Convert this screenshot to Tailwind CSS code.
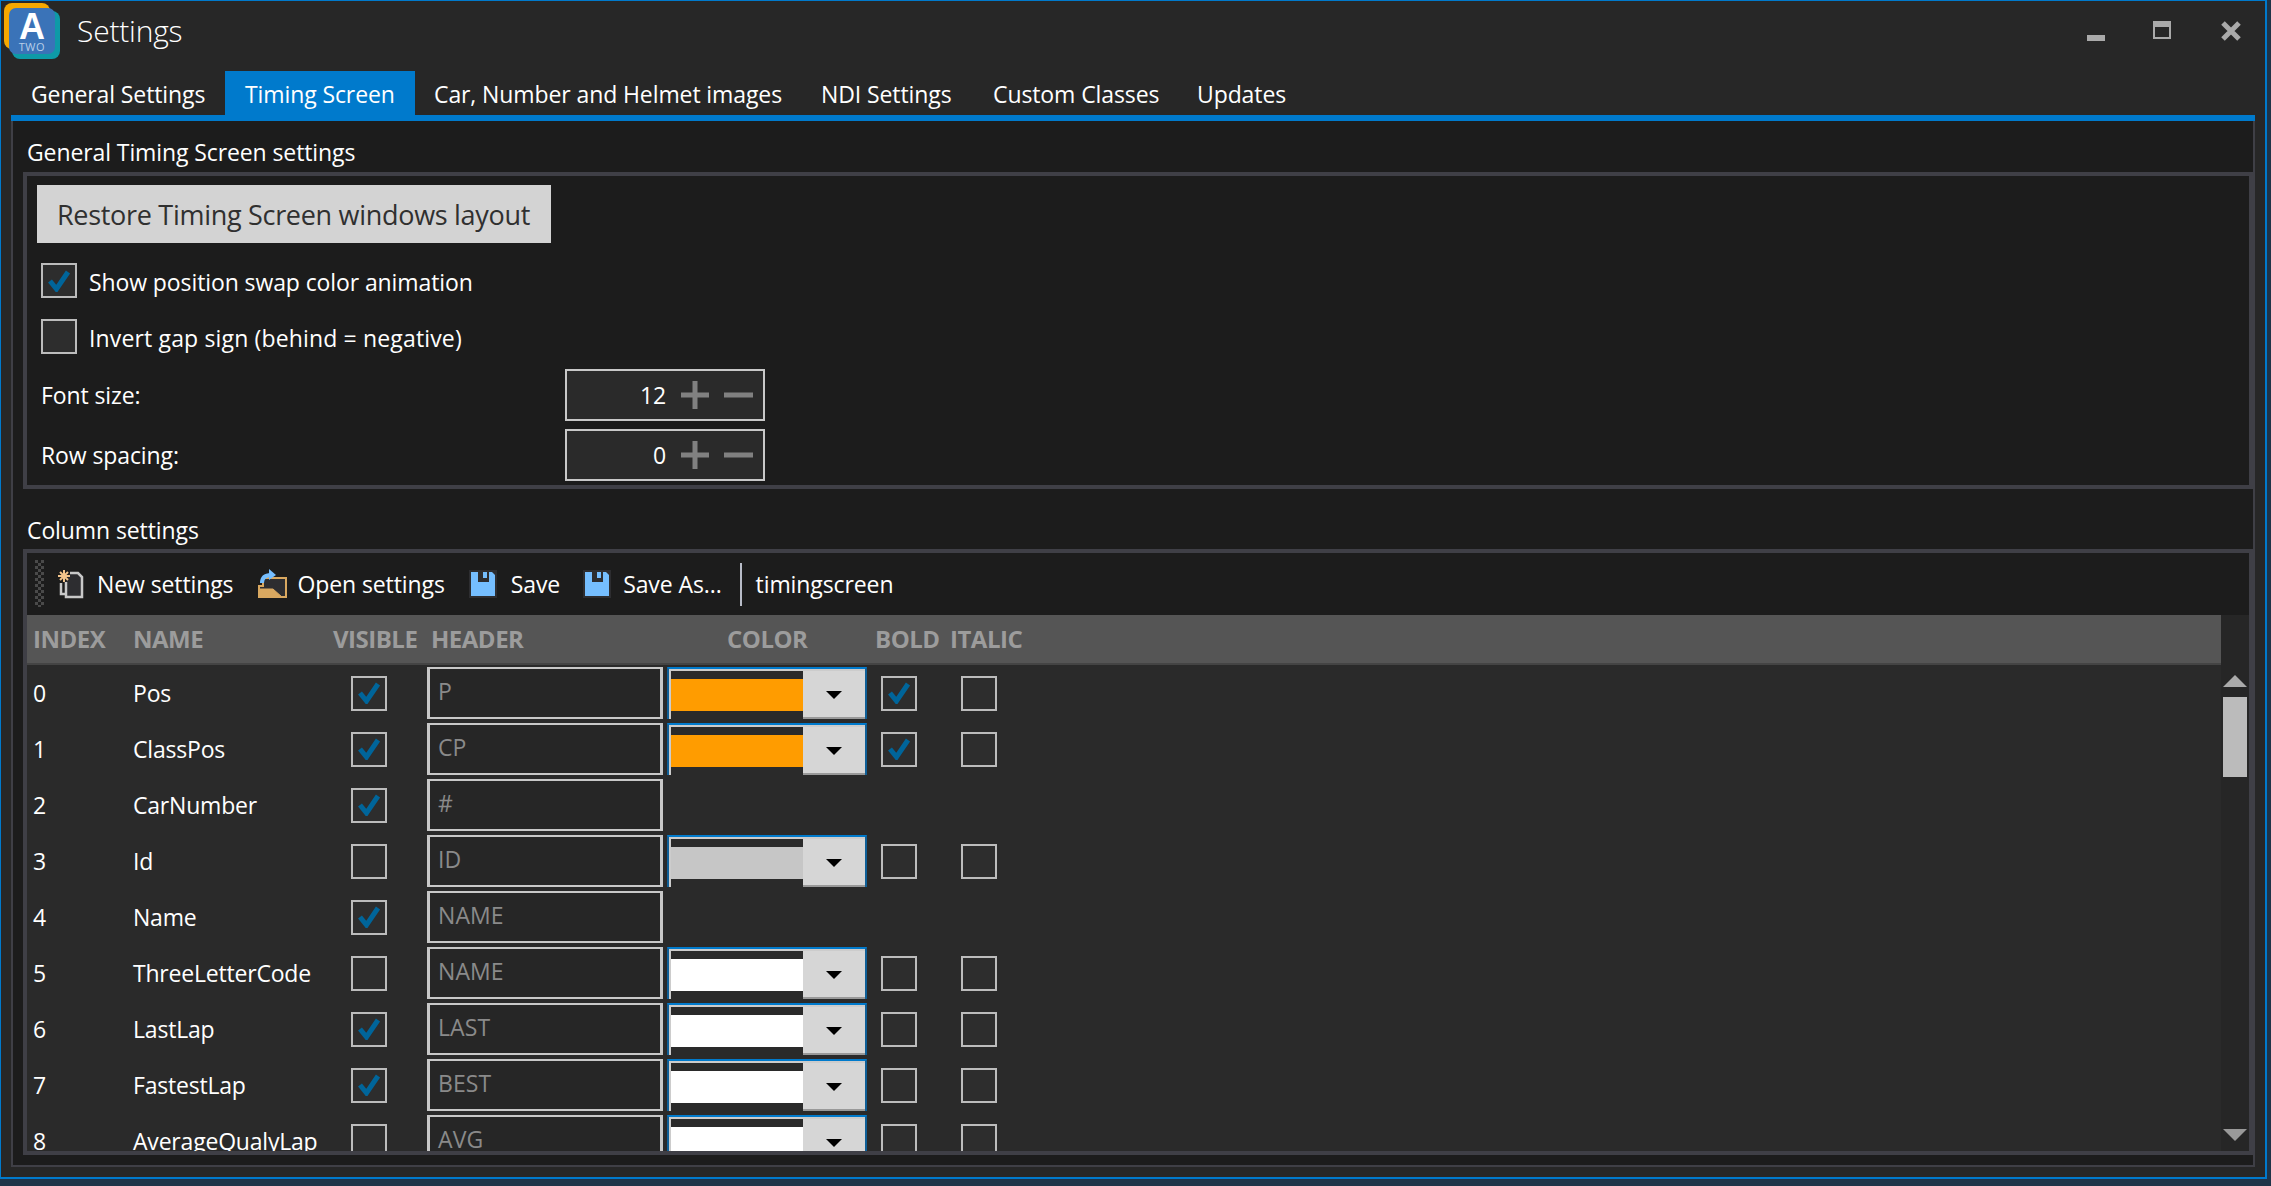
<!DOCTYPE html>
<html>
<head>
<meta charset="utf-8">
<title>Settings</title>
<script src="https://cdn.jsdelivr.net/npm/@tailwindcss/browser@4"></script>
</head>
<body class="bg-[#1f3448] overflow-hidden font-['Open_Sans','Noto_Sans',sans-serif] text-[23px] tracking-[-0.1px] text-white">
<div class="w-[2267px] h-[1179px] bg-[#272727] border-t border-l border-r-2 border-b-2 border-[#007acc] flex flex-col">
  <!-- title bar -->
  <div class="h-[70px] flex items-start shrink-0">
    <div class="relative w-[56px] h-[56px] ml-[3px] mt-[2px] shrink-0">
      <div class="absolute left-0 top-0 w-[46px] h-[46px] rounded-[8px] bg-[#f5a800]"></div>
      <div class="absolute left-[8px] top-[8px] w-[48px] h-[48px] rounded-[8px] bg-[#0e9aa7]"></div>
      <div class="absolute left-[5px] top-[5px] w-[46px] h-[46px] rounded-[7px] bg-[#3a73b8] flex flex-col items-center pt-[4px]">
        <span class="text-[36px] leading-[30px] font-bold tracking-normal font-['Liberation_Sans',sans-serif]">A</span>
        <span class="text-[11px] leading-[10px] tracking-[0.6px] text-[#b9cfe8]">TWO</span>
      </div>
    </div>
    <span class="ml-[17px] mt-[12px] text-[30px] leading-[36px] font-light tracking-[-0.2px] text-white">Settings</span>
    <div class="flex-1"></div>
    <div class="w-[18px] h-[6px] bg-[#aaaaaa] mt-[34px] mr-[48px]"></div>
    <div class="w-[18px] h-[18px] border-2 border-t-[6px] border-[#aaaaaa] mt-[20px] mr-[50px]"></div>
    <svg class="mt-[20px] mr-[24px]" width="20" height="20" viewBox="0 0 20 20"><path d="M2 2 18 18M18 2 2 18" stroke="#aaaaaa" stroke-width="5" fill="none"/></svg>
  </div>
  <!-- tabs -->
  <div class="h-[44px] flex items-stretch ml-[10px] mr-[10px] shrink-0 leading-[46px]">
    <div class="pl-[20px] w-[214px]">General Settings</div>
    <div class="w-[190px] pl-[20px] bg-[#007acc]">Timing Screen</div>
    <div class="pl-[19px] w-[406px]">Car, Number and Helmet images</div>
    <div class="w-[172px]">NDI Settings</div>
    <div class="w-[204px]">Custom Classes</div>
    <div>Updates</div>
  </div>
  <div class="h-[6px] bg-[#007acc] ml-[10px] mr-[10px] shrink-0"></div>
  <!-- tab content -->
  <div class="flex-1 min-h-0 ml-[10px] mr-[10px] mb-[10px] bg-[#1c1c1c] border-x-2 border-b-2 border-[#3f3f46] flex flex-col pl-[10px] pb-[10px]">
    <div class="h-[51px] pt-[15px] pl-[4px] leading-[32px] shrink-0">General Timing Screen settings</div>
    <!-- group 1 -->
    <div class="h-[317px] border-4 border-[#3f3f46] shrink-0 pl-[10px] pt-[9px]">
      <div class="w-[514px] h-[58px] bg-[#d3d3d3] text-[#303030] text-[27px] tracking-[-0.3px] leading-[60px] pl-[20px]">Restore Timing Screen windows layout</div>
      <div class="flex items-center ml-[4px] mt-[20px] h-[35px]">
        <div class="w-[36px] h-[35px] border-2 border-[#bcbcbc] bg-[#2d2d2d] flex items-center justify-center shrink-0">
          <svg width="24" height="22" viewBox="0 0 24 22"><path d="M3 11 9.500 19 21 2" stroke="#00659a" stroke-width="5" fill="none"/></svg>
        </div>
        <span class="ml-[12px] pt-[3px]">Show position swap color animation</span>
      </div>
      <div class="flex items-center ml-[4px] mt-[21px] h-[35px]">
        <div class="w-[36px] h-[35px] border-2 border-[#bcbcbc] bg-[#2d2d2d] shrink-0"></div>
        <span class="ml-[12px] pt-[3px] tracking-[0.15px]">Invert gap sign (behind = negative)</span>
      </div>
      <div class="flex items-center ml-[4px] mt-[15px] h-[52px]">
        <span class="w-[524px] pt-[1px]">Font size:</span>
        <div class="w-[200px] h-[52px] border-2 border-[#c8c8c8] bg-[#2a2a2a] flex items-center">
          <span class="w-[99px] text-right">12</span>
          <svg class="ml-[15px]" width="28" height="28" viewBox="0 0 28 28"><path d="M0 14H28M14 0V28" stroke="#808080" stroke-width="5"/></svg>
          <svg class="ml-[15px]" width="29" height="28" viewBox="0 0 29 28"><path d="M0 14H29" stroke="#808080" stroke-width="5"/></svg>
        </div>
      </div>
      <div class="flex items-center ml-[4px] mt-[8px] h-[52px]">
        <span class="w-[524px] pt-[1px]">Row spacing:</span>
        <div class="w-[200px] h-[52px] border-2 border-[#c8c8c8] bg-[#2a2a2a] flex items-center">
          <span class="w-[99px] text-right pt-[1px]">0</span>
          <svg class="ml-[15px]" width="28" height="28" viewBox="0 0 28 28"><path d="M0 14H28M14 0V28" stroke="#808080" stroke-width="5"/></svg>
          <svg class="ml-[15px]" width="29" height="28" viewBox="0 0 29 28"><path d="M0 14H29" stroke="#808080" stroke-width="5"/></svg>
        </div>
      </div>
    </div>
    <div class="h-[60px] pt-[25px] pl-[4px] leading-[32px] shrink-0">Column settings</div>
    <!-- group 2 -->
    <div class="flex-1 min-h-0 border-4 border-[#3f3f46] flex flex-col">
      <!-- toolbar -->
      <div class="h-[62px] shrink-0 flex items-center relative">
        <svg class="ml-[8px] mt-[-1px]" width="9" height="47" viewBox="0 0 9 47">
          <defs><pattern id="grip" width="6" height="6" patternUnits="userSpaceOnUse"><rect x="0" y="0" width="3" height="3" fill="#4a4a4a"/><rect x="3" y="3" width="3" height="3" fill="#4a4a4a"/></pattern></defs>
          <rect width="9" height="47" fill="url(#grip)"/>
        </svg>
        <svg class="ml-[13px]" width="28" height="32" viewBox="0 0 28 32">
          <path d="M13 5H21L25 9V29H9V14" fill="#2d2d30" stroke="#c8c8c8" stroke-width="2.500"/>
          <path d="M4 15V26H9" fill="none" stroke="#c8c8c8" stroke-width="2.500"/>
          <path d="M7 2V14M1 8H13M3 4 11 12M11 4 3 12" stroke="#f3c48b" stroke-width="2"/>
        </svg>
        <span class="ml-[12px] leading-[32px]">New settings</span>
        <svg class="ml-[23px]" width="32" height="32" viewBox="0 0 32 32">
          <path d="M7 10H30V29H3V18H7Z" fill="#2d2d30" stroke="#d9a860" stroke-width="2"/>
          <path d="M3 21H17L26 29H3Z" fill="#d9a860" stroke="#d9a860"/>
          <path d="M6 15C6 9 10 7 15 7" stroke="#75beff" stroke-width="4" fill="none"/>
          <path d="M13 1 20 7 13 12Z" fill="#75beff"/>
        </svg>
        <span class="ml-[9px] leading-[32px]">Open settings</span>
        <svg class="ml-[24px]" width="28" height="28" viewBox="0 0 28 28">
          <rect width="28" height="28" fill="#2d2d30"/><path d="M2 2H23L26 5V26H2Z" fill="#75beff"/><path d="M9 1H20V12H9Z" fill="#2d2d30"/><rect x="14" y="2" width="4" height="6" fill="#75beff"/>
        </svg>
        <span class="ml-[14px] leading-[32px]">Save</span>
        <svg class="ml-[23px]" width="28" height="28" viewBox="0 0 28 28">
          <rect width="28" height="28" fill="#2d2d30"/><path d="M2 2H23L26 5V26H2Z" fill="#75beff"/><path d="M9 1H20V12H9Z" fill="#2d2d30"/><rect x="14" y="2" width="4" height="6" fill="#75beff"/>
        </svg>
        <span class="ml-[12px] leading-[32px]">Save As...</span>
        <div class="ml-[18px] w-[2px] h-[43px] bg-[#b8bcc8]"></div>
        <span class="ml-[14px] leading-[32px]">timingscreen</span>
      </div>
      <div class="flex-1 min-h-0 flex">
        <div class="flex-1 min-w-0 flex flex-col bg-[#2a2a2a]">
          <!-- header -->
          <div class="h-[50px] shrink-0 bg-[#555555] border-b-2 border-[#444444] flex pl-[6px] font-bold text-[#9c9c9c] leading-[48px] text-[24px] tracking-[-0.5px]">
            <span class="w-[100px]">INDEX</span><span class="w-[200px]">NAME</span><span class="w-[98px]">VISIBLE</span><span class="w-[296px]">HEADER</span><span class="w-[148px]">COLOR</span><span class="w-[75px]">BOLD</span><span>ITALIC</span>
          </div>
          <!-- rows -->
          <div class="flex-1 min-h-0 overflow-hidden">
            <div class="h-[56px] grid grid-cols-[100px_218px_76px_240px_214px_80px_36px] items-center pl-[6px] tracking-[-0.2px] [&>span]:pt-[1px]">
              <span>0</span><span>Pos</span>
              <div class="w-[36px] h-[35px] border-2 border-[#bcbcbc] bg-[#2d2d2d] flex items-center justify-center"><svg width="24" height="22" viewBox="0 0 24 22"><path d="M3 11 9.500 19 21 2" stroke="#00659a" stroke-width="5" fill="none"/></svg></div>
              <div class="w-[236px] h-[52px] border-x-[3px] border-y-2 border-[#c8c8c8] bg-[#262626] text-[#8a8a8a] pl-[8px] leading-[45px] tracking-[0.1px]">P</div>
              <div class="relative w-[200px] h-[52px] border-t-2 border-x-2 border-t-[#007acc] border-x-[#0f5f97]">
                <div class="h-full border-t-2 border-l-2 border-[#cccccc] flex">
                  <div class="w-[132px] pt-[8px]"><div class="h-[32px] bg-[#ff9c00]"></div></div>
                  <div class="w-[62px] flex-1 bg-[#d6d6d6] border-b-2 border-[#999999] flex items-center justify-center"><svg class="mt-[2px]" width="16" height="8" viewBox="0 0 16 8"><path d="M0 0H16L8 8Z" fill="#000"/></svg></div>
                </div>
              </div>
              <div class="w-[36px] h-[35px] border-2 border-[#bcbcbc] bg-[#2d2d2d] flex items-center justify-center"><svg width="24" height="22" viewBox="0 0 24 22"><path d="M3 11 9.500 19 21 2" stroke="#00659a" stroke-width="5" fill="none"/></svg></div>
              <div class="w-[36px] h-[35px] border-2 border-[#bcbcbc] bg-[#2d2d2d]"></div>
            </div>
            <div class="h-[56px] grid grid-cols-[100px_218px_76px_240px_214px_80px_36px] items-center pl-[6px] tracking-[-0.2px] [&>span]:pt-[1px]">
              <span>1</span><span>ClassPos</span>
              <div class="w-[36px] h-[35px] border-2 border-[#bcbcbc] bg-[#2d2d2d] flex items-center justify-center"><svg width="24" height="22" viewBox="0 0 24 22"><path d="M3 11 9.500 19 21 2" stroke="#00659a" stroke-width="5" fill="none"/></svg></div>
              <div class="w-[236px] h-[52px] border-x-[3px] border-y-2 border-[#c8c8c8] bg-[#262626] text-[#8a8a8a] pl-[8px] leading-[45px] tracking-[0.1px]">CP</div>
              <div class="relative w-[200px] h-[52px] border-t-2 border-x-2 border-t-[#007acc] border-x-[#0f5f97]">
                <div class="h-full border-t-2 border-l-2 border-[#cccccc] flex">
                  <div class="w-[132px] pt-[8px]"><div class="h-[32px] bg-[#ff9c00]"></div></div>
                  <div class="w-[62px] flex-1 bg-[#d6d6d6] border-b-2 border-[#999999] flex items-center justify-center"><svg class="mt-[2px]" width="16" height="8" viewBox="0 0 16 8"><path d="M0 0H16L8 8Z" fill="#000"/></svg></div>
                </div>
              </div>
              <div class="w-[36px] h-[35px] border-2 border-[#bcbcbc] bg-[#2d2d2d] flex items-center justify-center"><svg width="24" height="22" viewBox="0 0 24 22"><path d="M3 11 9.500 19 21 2" stroke="#00659a" stroke-width="5" fill="none"/></svg></div>
              <div class="w-[36px] h-[35px] border-2 border-[#bcbcbc] bg-[#2d2d2d]"></div>
            </div>
            <div class="h-[56px] grid grid-cols-[100px_218px_76px_240px_214px_80px_36px] items-center pl-[6px] tracking-[-0.2px] [&>span]:pt-[1px]">
              <span>2</span><span>CarNumber</span>
              <div class="w-[36px] h-[35px] border-2 border-[#bcbcbc] bg-[#2d2d2d] flex items-center justify-center"><svg width="24" height="22" viewBox="0 0 24 22"><path d="M3 11 9.500 19 21 2" stroke="#00659a" stroke-width="5" fill="none"/></svg></div>
              <div class="w-[236px] h-[52px] border-x-[3px] border-y-2 border-[#c8c8c8] bg-[#262626] text-[#8a8a8a] pl-[8px] leading-[45px] tracking-[0.1px]">#</div>
            </div>
            <div class="h-[56px] grid grid-cols-[100px_218px_76px_240px_214px_80px_36px] items-center pl-[6px] tracking-[-0.2px] [&>span]:pt-[1px]">
              <span>3</span><span>Id</span>
              <div class="w-[36px] h-[35px] border-2 border-[#bcbcbc] bg-[#2d2d2d]"></div>
              <div class="w-[236px] h-[52px] border-x-[3px] border-y-2 border-[#c8c8c8] bg-[#262626] text-[#8a8a8a] pl-[8px] leading-[45px] tracking-[0.1px]">ID</div>
              <div class="relative w-[200px] h-[52px] border-t-2 border-x-2 border-t-[#007acc] border-x-[#0f5f97]">
                <div class="h-full border-t-2 border-l-2 border-[#cccccc] flex">
                  <div class="w-[132px] pt-[8px]"><div class="h-[32px] bg-[#c6c6c6]"></div></div>
                  <div class="w-[62px] flex-1 bg-[#d6d6d6] border-b-2 border-[#999999] flex items-center justify-center"><svg class="mt-[2px]" width="16" height="8" viewBox="0 0 16 8"><path d="M0 0H16L8 8Z" fill="#000"/></svg></div>
                </div>
              </div>
              <div class="w-[36px] h-[35px] border-2 border-[#bcbcbc] bg-[#2d2d2d]"></div>
              <div class="w-[36px] h-[35px] border-2 border-[#bcbcbc] bg-[#2d2d2d]"></div>
            </div>
            <div class="h-[56px] grid grid-cols-[100px_218px_76px_240px_214px_80px_36px] items-center pl-[6px] tracking-[-0.2px] [&>span]:pt-[1px]">
              <span>4</span><span>Name</span>
              <div class="w-[36px] h-[35px] border-2 border-[#bcbcbc] bg-[#2d2d2d] flex items-center justify-center"><svg width="24" height="22" viewBox="0 0 24 22"><path d="M3 11 9.500 19 21 2" stroke="#00659a" stroke-width="5" fill="none"/></svg></div>
              <div class="w-[236px] h-[52px] border-x-[3px] border-y-2 border-[#c8c8c8] bg-[#262626] text-[#8a8a8a] pl-[8px] leading-[45px] tracking-[0.1px]">NAME</div>
            </div>
            <div class="h-[56px] grid grid-cols-[100px_218px_76px_240px_214px_80px_36px] items-center pl-[6px] tracking-[-0.2px] [&>span]:pt-[1px]">
              <span>5</span><span>ThreeLetterCode</span>
              <div class="w-[36px] h-[35px] border-2 border-[#bcbcbc] bg-[#2d2d2d]"></div>
              <div class="w-[236px] h-[52px] border-x-[3px] border-y-2 border-[#c8c8c8] bg-[#262626] text-[#8a8a8a] pl-[8px] leading-[45px] tracking-[0.1px]">NAME</div>
              <div class="relative w-[200px] h-[52px] border-t-2 border-x-2 border-t-[#007acc] border-x-[#0f5f97]">
                <div class="h-full border-t-2 border-l-2 border-[#cccccc] flex">
                  <div class="w-[132px] pt-[8px]"><div class="h-[32px] bg-white"></div></div>
                  <div class="w-[62px] flex-1 bg-[#d6d6d6] border-b-2 border-[#999999] flex items-center justify-center"><svg class="mt-[2px]" width="16" height="8" viewBox="0 0 16 8"><path d="M0 0H16L8 8Z" fill="#000"/></svg></div>
                </div>
              </div>
              <div class="w-[36px] h-[35px] border-2 border-[#bcbcbc] bg-[#2d2d2d]"></div>
              <div class="w-[36px] h-[35px] border-2 border-[#bcbcbc] bg-[#2d2d2d]"></div>
            </div>
            <div class="h-[56px] grid grid-cols-[100px_218px_76px_240px_214px_80px_36px] items-center pl-[6px] tracking-[-0.2px] [&>span]:pt-[1px]">
              <span>6</span><span>LastLap</span>
              <div class="w-[36px] h-[35px] border-2 border-[#bcbcbc] bg-[#2d2d2d] flex items-center justify-center"><svg width="24" height="22" viewBox="0 0 24 22"><path d="M3 11 9.500 19 21 2" stroke="#00659a" stroke-width="5" fill="none"/></svg></div>
              <div class="w-[236px] h-[52px] border-x-[3px] border-y-2 border-[#c8c8c8] bg-[#262626] text-[#8a8a8a] pl-[8px] leading-[45px] tracking-[0.1px]">LAST</div>
              <div class="relative w-[200px] h-[52px] border-t-2 border-x-2 border-t-[#007acc] border-x-[#0f5f97]">
                <div class="h-full border-t-2 border-l-2 border-[#cccccc] flex">
                  <div class="w-[132px] pt-[8px]"><div class="h-[32px] bg-white"></div></div>
                  <div class="w-[62px] flex-1 bg-[#d6d6d6] border-b-2 border-[#999999] flex items-center justify-center"><svg class="mt-[2px]" width="16" height="8" viewBox="0 0 16 8"><path d="M0 0H16L8 8Z" fill="#000"/></svg></div>
                </div>
              </div>
              <div class="w-[36px] h-[35px] border-2 border-[#bcbcbc] bg-[#2d2d2d]"></div>
              <div class="w-[36px] h-[35px] border-2 border-[#bcbcbc] bg-[#2d2d2d]"></div>
            </div>
            <div class="h-[56px] grid grid-cols-[100px_218px_76px_240px_214px_80px_36px] items-center pl-[6px] tracking-[-0.2px] [&>span]:pt-[1px]">
              <span>7</span><span>FastestLap</span>
              <div class="w-[36px] h-[35px] border-2 border-[#bcbcbc] bg-[#2d2d2d] flex items-center justify-center"><svg width="24" height="22" viewBox="0 0 24 22"><path d="M3 11 9.500 19 21 2" stroke="#00659a" stroke-width="5" fill="none"/></svg></div>
              <div class="w-[236px] h-[52px] border-x-[3px] border-y-2 border-[#c8c8c8] bg-[#262626] text-[#8a8a8a] pl-[8px] leading-[45px] tracking-[0.1px]">BEST</div>
              <div class="relative w-[200px] h-[52px] border-t-2 border-x-2 border-t-[#007acc] border-x-[#0f5f97]">
                <div class="h-full border-t-2 border-l-2 border-[#cccccc] flex">
                  <div class="w-[132px] pt-[8px]"><div class="h-[32px] bg-white"></div></div>
                  <div class="w-[62px] flex-1 bg-[#d6d6d6] border-b-2 border-[#999999] flex items-center justify-center"><svg class="mt-[2px]" width="16" height="8" viewBox="0 0 16 8"><path d="M0 0H16L8 8Z" fill="#000"/></svg></div>
                </div>
              </div>
              <div class="w-[36px] h-[35px] border-2 border-[#bcbcbc] bg-[#2d2d2d]"></div>
              <div class="w-[36px] h-[35px] border-2 border-[#bcbcbc] bg-[#2d2d2d]"></div>
            </div>
            <div class="h-[56px] grid grid-cols-[100px_218px_76px_240px_214px_80px_36px] items-center pl-[6px] tracking-[-0.2px] [&>span]:pt-[1px]">
              <span>8</span><span>AverageQualyLap</span>
              <div class="w-[36px] h-[35px] border-2 border-[#bcbcbc] bg-[#2d2d2d]"></div>
              <div class="w-[236px] h-[52px] border-x-[3px] border-y-2 border-[#c8c8c8] bg-[#262626] text-[#8a8a8a] pl-[8px] leading-[45px] tracking-[0.1px]">AVG</div>
              <div class="relative w-[200px] h-[52px] border-t-2 border-x-2 border-t-[#007acc] border-x-[#0f5f97]">
                <div class="h-full border-t-2 border-l-2 border-[#cccccc] flex">
                  <div class="w-[132px] pt-[8px]"><div class="h-[32px] bg-white"></div></div>
                  <div class="w-[62px] flex-1 bg-[#d6d6d6] border-b-2 border-[#999999] flex items-center justify-center"><svg class="mt-[2px]" width="16" height="8" viewBox="0 0 16 8"><path d="M0 0H16L8 8Z" fill="#000"/></svg></div>
                </div>
              </div>
              <div class="w-[36px] h-[35px] border-2 border-[#bcbcbc] bg-[#2d2d2d]"></div>
              <div class="w-[36px] h-[35px] border-2 border-[#bcbcbc] bg-[#2d2d2d]"></div>
            </div>
          </div>
        </div>
        <!-- scrollbar -->
        <div class="w-[28px] shrink-0 bg-[#262626] flex flex-col items-center pt-[60px] pb-[10px]">
          <svg width="24" height="12" viewBox="0 0 24 12"><path d="M0 12 12 0 24 12Z" fill="#aaaaaa"/></svg>
          <div class="w-[24px] h-[80px] mt-[10px] bg-[#bbbbbb]"></div>
          <div class="flex-1"></div>
          <svg width="24" height="12" viewBox="0 0 24 12"><path d="M0 0H24L12 12Z" fill="#999999"/></svg>
        </div>
      </div>
    </div>
  </div>
</div>
</body>
</html>
